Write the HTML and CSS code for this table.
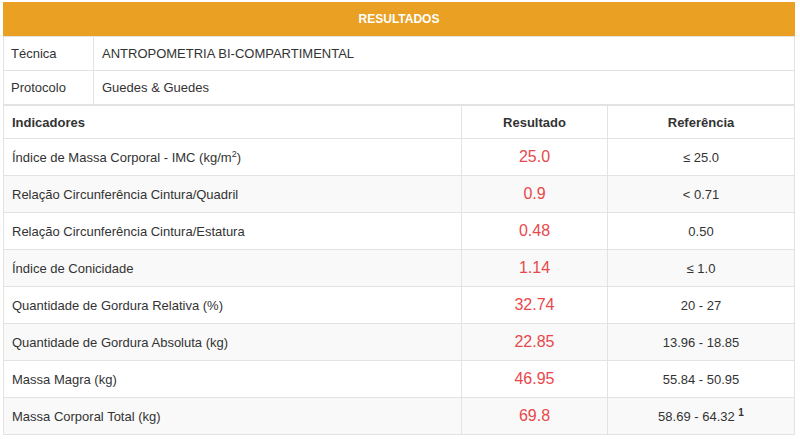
FILE: index.html
```html
<!DOCTYPE html>
<html>
<head>
<meta charset="utf-8">
<link rel="stylesheet" href="styles.css">
</head>
<body>
<div class="panel">
  <div class="panel-title">RESULTADOS</div>
  <table class="info">
    <tr><td class="lbl">Técnica</td><td>ANTROPOMETRIA BI-COMPARTIMENTAL</td></tr>
    <tr><td class="lbl">Protocolo</td><td>Guedes &amp; Guedes</td></tr>
  </table>
  <table class="results">
    <thead>
      <tr><th class="c-ind">Indicadores</th><th class="c-res">Resultado</th><th class="c-ref">Referência</th></tr>
    </thead>
    <tbody>
      <tr><td>Índice de Massa Corporal - IMC (kg/m<sup>2</sup>)</td><td class="val">25.0</td><td class="ref">≤ 25.0</td></tr>
      <tr><td>Relação Circunferência Cintura/Quadril</td><td class="val">0.9</td><td class="ref">&lt; 0.71</td></tr>
      <tr><td>Relação Circunferência Cintura/Estatura</td><td class="val">0.48</td><td class="ref">0.50</td></tr>
      <tr><td>Índice de Conicidade</td><td class="val">1.14</td><td class="ref">≤ 1.0</td></tr>
      <tr><td>Quantidade de Gordura Relativa (%)</td><td class="val">32.74</td><td class="ref">20 - 27</td></tr>
      <tr><td>Quantidade de Gordura Absoluta (kg)</td><td class="val">22.85</td><td class="ref">13.96 - 18.85</td></tr>
      <tr><td>Massa Magra (kg)</td><td class="val">46.95</td><td class="ref">55.84 - 50.95</td></tr>
      <tr><td>Massa Corporal Total (kg)</td><td class="val">69.8</td><td class="ref">58.69 - 64.32 <sup class="note">1</sup></td></tr>
    </tbody>
  </table>
</div>
</body>
</html>
```

FILE: styles.css
```css
html, body {
  margin: 0;
  padding: 0;
  background: #fff;
}
body {
  font-family: "Liberation Sans", Arial, sans-serif;
  font-size: 13px;
  color: #333;
}
.panel {
  margin: 2px 5px 0 3px;
  width: 792px;
}
.panel-title {
  background: #e9a023;
  color: #fff;
  font-weight: bold;
  font-size: 12px;
  text-align: center;
  height: 34px;
  line-height: 34px;
}
table {
  width: 100%;
  border-collapse: collapse;
  table-layout: fixed;
}
td, th {
  border: 1px solid #e3e3e3;
  padding: 0 8px;
  vertical-align: middle;
  text-align: left;
}
.info td {
  height: 33px;
}
.info td.lbl {
  width: 74px;
  padding-left: 7px;
}
.info tr:last-child td {
  border-bottom: 2px solid #e3e3e3;
}
.results th {
  height: 32px;
  font-weight: bold;
  border-top: none;
}
.results th.c-ind { width: 441px; }
.results th.c-res { width: 129px; text-align: center; }
.results th.c-ref { text-align: center; }
.results td {
  height: 36px;
}
.results tbody tr:nth-child(even) td {
  background: #f9f9f9;
}
.results td.val {
  text-align: center;
  color: #e8484b;
  font-size: 16px;
}
.results td.ref {
  text-align: center;
}
sup {
  font-size: 9px;
  line-height: 0;
  vertical-align: 5px;
}
sup.note {
  font-size: 10px;
  font-weight: bold;
}
```
